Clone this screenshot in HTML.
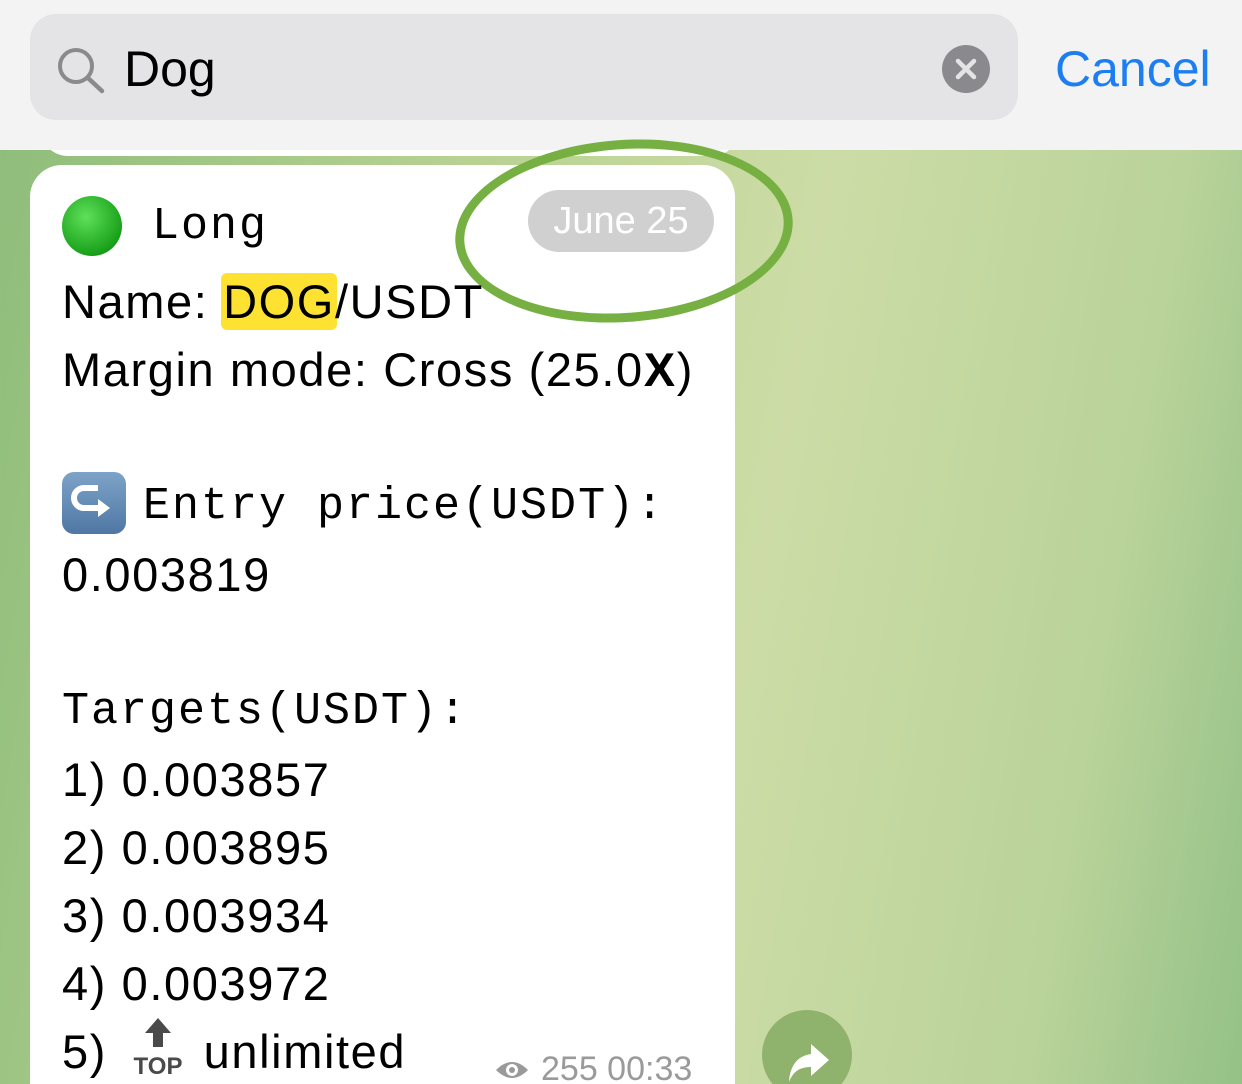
<!DOCTYPE html>
<html style="overflow:hidden;height:1084px"><head><style>
body{margin:0;width:1242px;height:1084px;overflow:hidden;position:relative;font-family:"Liberation Sans",sans-serif;background:linear-gradient(100deg,#8dbc7a 0%,#b8d292 35%,#cddca6 60%,#b9d39a 85%,#94c187 100%);}
.top{position:absolute;left:0;top:0;width:1242px;height:150px;background:#f3f3f3;}
.search{position:absolute;left:30px;top:14px;width:988px;height:106px;border-radius:26px;background:#e4e4e6;}
.bubble{position:absolute;left:30px;top:165px;width:705px;height:919px;background:#fff;border-radius:32px 32px 0 0;}
.t{position:absolute;left:62px;font-size:47px;letter-spacing:1.6px;color:#000;white-space:nowrap;}
.m{font-family:"Liberation Mono",monospace;font-size:45px;letter-spacing:2px;}
</style></head><body>
<div style="position:absolute;left:40px;top:120px;width:700px;height:36px;background:#fff;border-radius:0 0 28px 28px;"></div>
<div class="top"></div>
<div class="search"></div>
<svg style="position:absolute;left:55px;top:45px" width="52" height="50"><circle cx="21" cy="21" r="16" fill="none" stroke="#8a8a8e" stroke-width="4"/><line x1="33" y1="33" x2="47" y2="46" stroke="#8a8a8e" stroke-width="4.5" stroke-linecap="round"/></svg>
<div style="position:absolute;left:124px;top:40px;font-size:50px;color:#000">Dog</div>
<svg style="position:absolute;left:941px;top:44px" width="50" height="50"><circle cx="25" cy="25" r="24" fill="#8a8a8e"/><path d="M17 17L33 33M33 17L17 33" stroke="#e4e4e6" stroke-width="4.5" stroke-linecap="round"/></svg>
<div style="position:absolute;left:1055px;top:40px;font-size:50px;color:#1c7ef0">Cancel</div>
<div class="bubble"></div>
<div style="position:absolute;left:62px;top:196px;width:60px;height:60px;border-radius:50%;background:radial-gradient(circle at 40% 35%,#5fe05a,#1aa11a 70%,#0d7d10);"></div>
<div class="t m" style="left:152px;top:201px">Long</div>
<div style="position:absolute;left:528px;top:190px;width:186px;height:62px;border-radius:31px;background:#d0d0d0;color:#fff;font-size:38px;text-align:center;line-height:62px">June 25</div>
<div style="position:absolute;left:455px;top:140px;width:338px;height:182px;border:9px solid #76b042;border-radius:50%;box-sizing:border-box;transform:rotate(-4deg)"></div>
<div class="t" style="top:274px">Name: <span style="background:#fee232;border-radius:6px;padding:2px 2px;margin:0 -2px">DOG</span>/USDT</div>
<div class="t" style="top:342px">Margin mode: Cross (25.0<b>X</b>)</div>
<div style="position:absolute;left:62px;top:472px;width:64px;height:62px;border-radius:12px;background:linear-gradient(#7ea3c8,#4e77a4);"><svg width="64" height="62"><path d="M36 16H22a10 10 0 0 0 0 20h18" fill="none" stroke="#fff" stroke-width="6"/><path d="M36 27l12 9-12 9z" fill="#fff"/></svg></div>
<div class="t m" style="left:143px;top:481px">Entry price(USDT):</div>
<div class="t" style="top:547px">0.003819</div>
<div class="t m" style="top:686px">Targets(USDT):</div>
<div class="t" style="top:752px">1) 0.003857</div>
<div class="t" style="top:820px">2) 0.003895</div>
<div class="t" style="top:888px">3) 0.003934</div>
<div class="t" style="top:956px">4) 0.003972</div>
<div class="t" style="top:1024px">5) <span style="display:inline-block;width:82px"></span>unlimited</div>
<svg style="position:absolute;left:132px;top:1016px" width="52" height="62"><path d="M26 2L13 17h8v14h10V17h8z" fill="#4a4a4a"/><text x="26" y="58" font-size="24" font-weight="bold" text-anchor="middle" font-family="Liberation Sans Narrow,Liberation Sans" fill="#4a4a4a">TOP</text></svg>
<svg style="position:absolute;left:494px;top:1056px" width="36" height="28"><path d="M2 14Q18-2 34 14Q18 30 2 14z" fill="#9a9a9a"/><circle cx="18" cy="14" r="6" fill="#fff"/><circle cx="18" cy="14" r="3" fill="#9a9a9a"/></svg>
<div style="position:absolute;left:541px;top:1050px;font-size:34px;color:#9a9a9a">255 00:33</div>
<div style="position:absolute;left:762px;top:1010px;width:90px;height:90px;border-radius:50%;background:#8fb36c"></div>
<svg style="position:absolute;left:787px;top:1040px" width="44" height="44"><path d="M24 4l18 16-18 16V27C12 27 6 32 2 42 3 26 10 16 24 14z" fill="#fff"/></svg>
</body></html>
